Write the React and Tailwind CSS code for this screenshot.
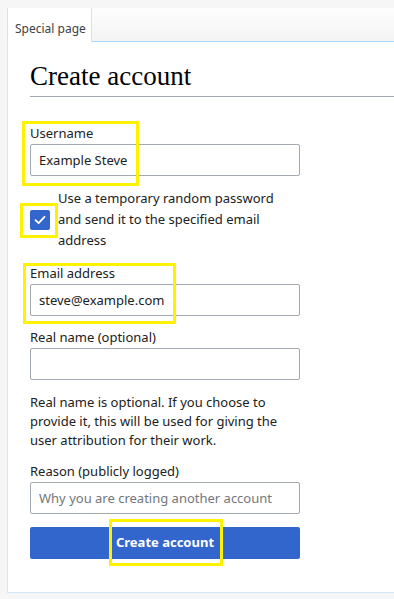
import { useState } from 'react'

function Field({ label, value, placeholder, className = '' }) {
  return (
    <div className={className}>
      <label className="block text-[13px] leading-[19px] text-[#202122]">{label}</label>
      <input
        type="text"
        defaultValue={value}
        placeholder={placeholder}
        className="mt-[1px] block h-[32px] w-full rounded-[2px] border border-[#a2a9b1] bg-white px-[8px] text-[13px] text-[#202122] placeholder:text-[#72777d] outline-none"
      />
    </div>
  )
}

// yellow annotation boxes drawn over the screenshot
function Mark({ className }) {
  return <div className={`pointer-events-none absolute border-[3px] border-[#fff200] ${className}`} />
}

export default function App() {
  const [checked, setChecked] = useState(true)

  return (
    <div className="relative min-h-[599px] overflow-hidden bg-[#f6f6f6] pt-[8px] pl-[7px] font-['Noto_Sans',sans-serif]">
      {/* Tabs */}
      <div className="flex h-[34px]">
        <div className="flex items-center border-l border-r border-[#cde6f7] bg-white pt-[7px] pl-[7px] pr-[5px] text-[12px] text-[#404244]">
          Special page
        </div>
        <div className="flex-1 border-b border-[#a7d7f9] bg-gradient-to-b from-[#fdfdfd] to-[#f4f4f4]" />
      </div>

      {/* Content */}
      <div className="h-[551px] border-l border-b border-[#d4e8f7] bg-white pl-[22px]">
        <h1 className="border-b border-[#a2a9b1] pt-[18px] pb-[3px] font-['Liberation_Serif',serif] text-[27px] leading-[33px] text-[#000]">
          Create account
        </h1>

        <form className="w-[270px] pt-[27px]" onSubmit={(e) => e.preventDefault()}>
          <Field label="Username" value="Example Steve" />

          <label className="mt-[12px] flex items-center gap-[8px] text-[13px] leading-[21px] text-[#202122]">
            <button
              type="button"
              onClick={() => setChecked(!checked)}
              className={`flex h-[20px] w-[20px] shrink-0 items-center justify-center rounded-[2px] ${checked ? 'bg-[#3366cc]' : 'border border-[#72777d] bg-white'}`}
            >
              {checked && (
                <svg width="12" height="10" viewBox="0 0 12 10" fill="none">
                  <path d="M1.5 5.2 4.6 8.2 10.5 1.8" stroke="white" strokeWidth="1.8" strokeLinecap="round" strokeLinejoin="round" />
                </svg>
              )}
            </button>
            <span>Use a temporary random password and send it to the specified email address</span>
          </label>

          <Field className="mt-[13px]" label="Email address" value="steve@example.com" />
          <Field className="mt-[12px]" label="Real name (optional)" />

          <p className="mt-[13px] text-[13px] leading-[19px] text-[#202122]">
            Real name is optional. If you choose to provide it, this will be used for giving the user attribution for their work.
          </p>

          <Field className="mt-[12px]" label="Reason (publicly logged)" placeholder="Why you are creating another account" />

          <button
            type="submit"
            className="mt-[13px] h-[32px] w-full rounded-[2px] bg-[#3366cc] text-[13px] font-bold text-white"
          >
            Create account
          </button>
        </form>
      </div>

      <Mark className="left-[22px] top-[121px] h-[65px] w-[117px]" />
      <Mark className="left-[20px] top-[203px] h-[35px] w-[38px]" />
      <Mark className="left-[23px] top-[263px] h-[61px] w-[153px]" />
      <Mark className="left-[109px] top-[519px] h-[47px] w-[114px]" />
    </div>
  )
}
